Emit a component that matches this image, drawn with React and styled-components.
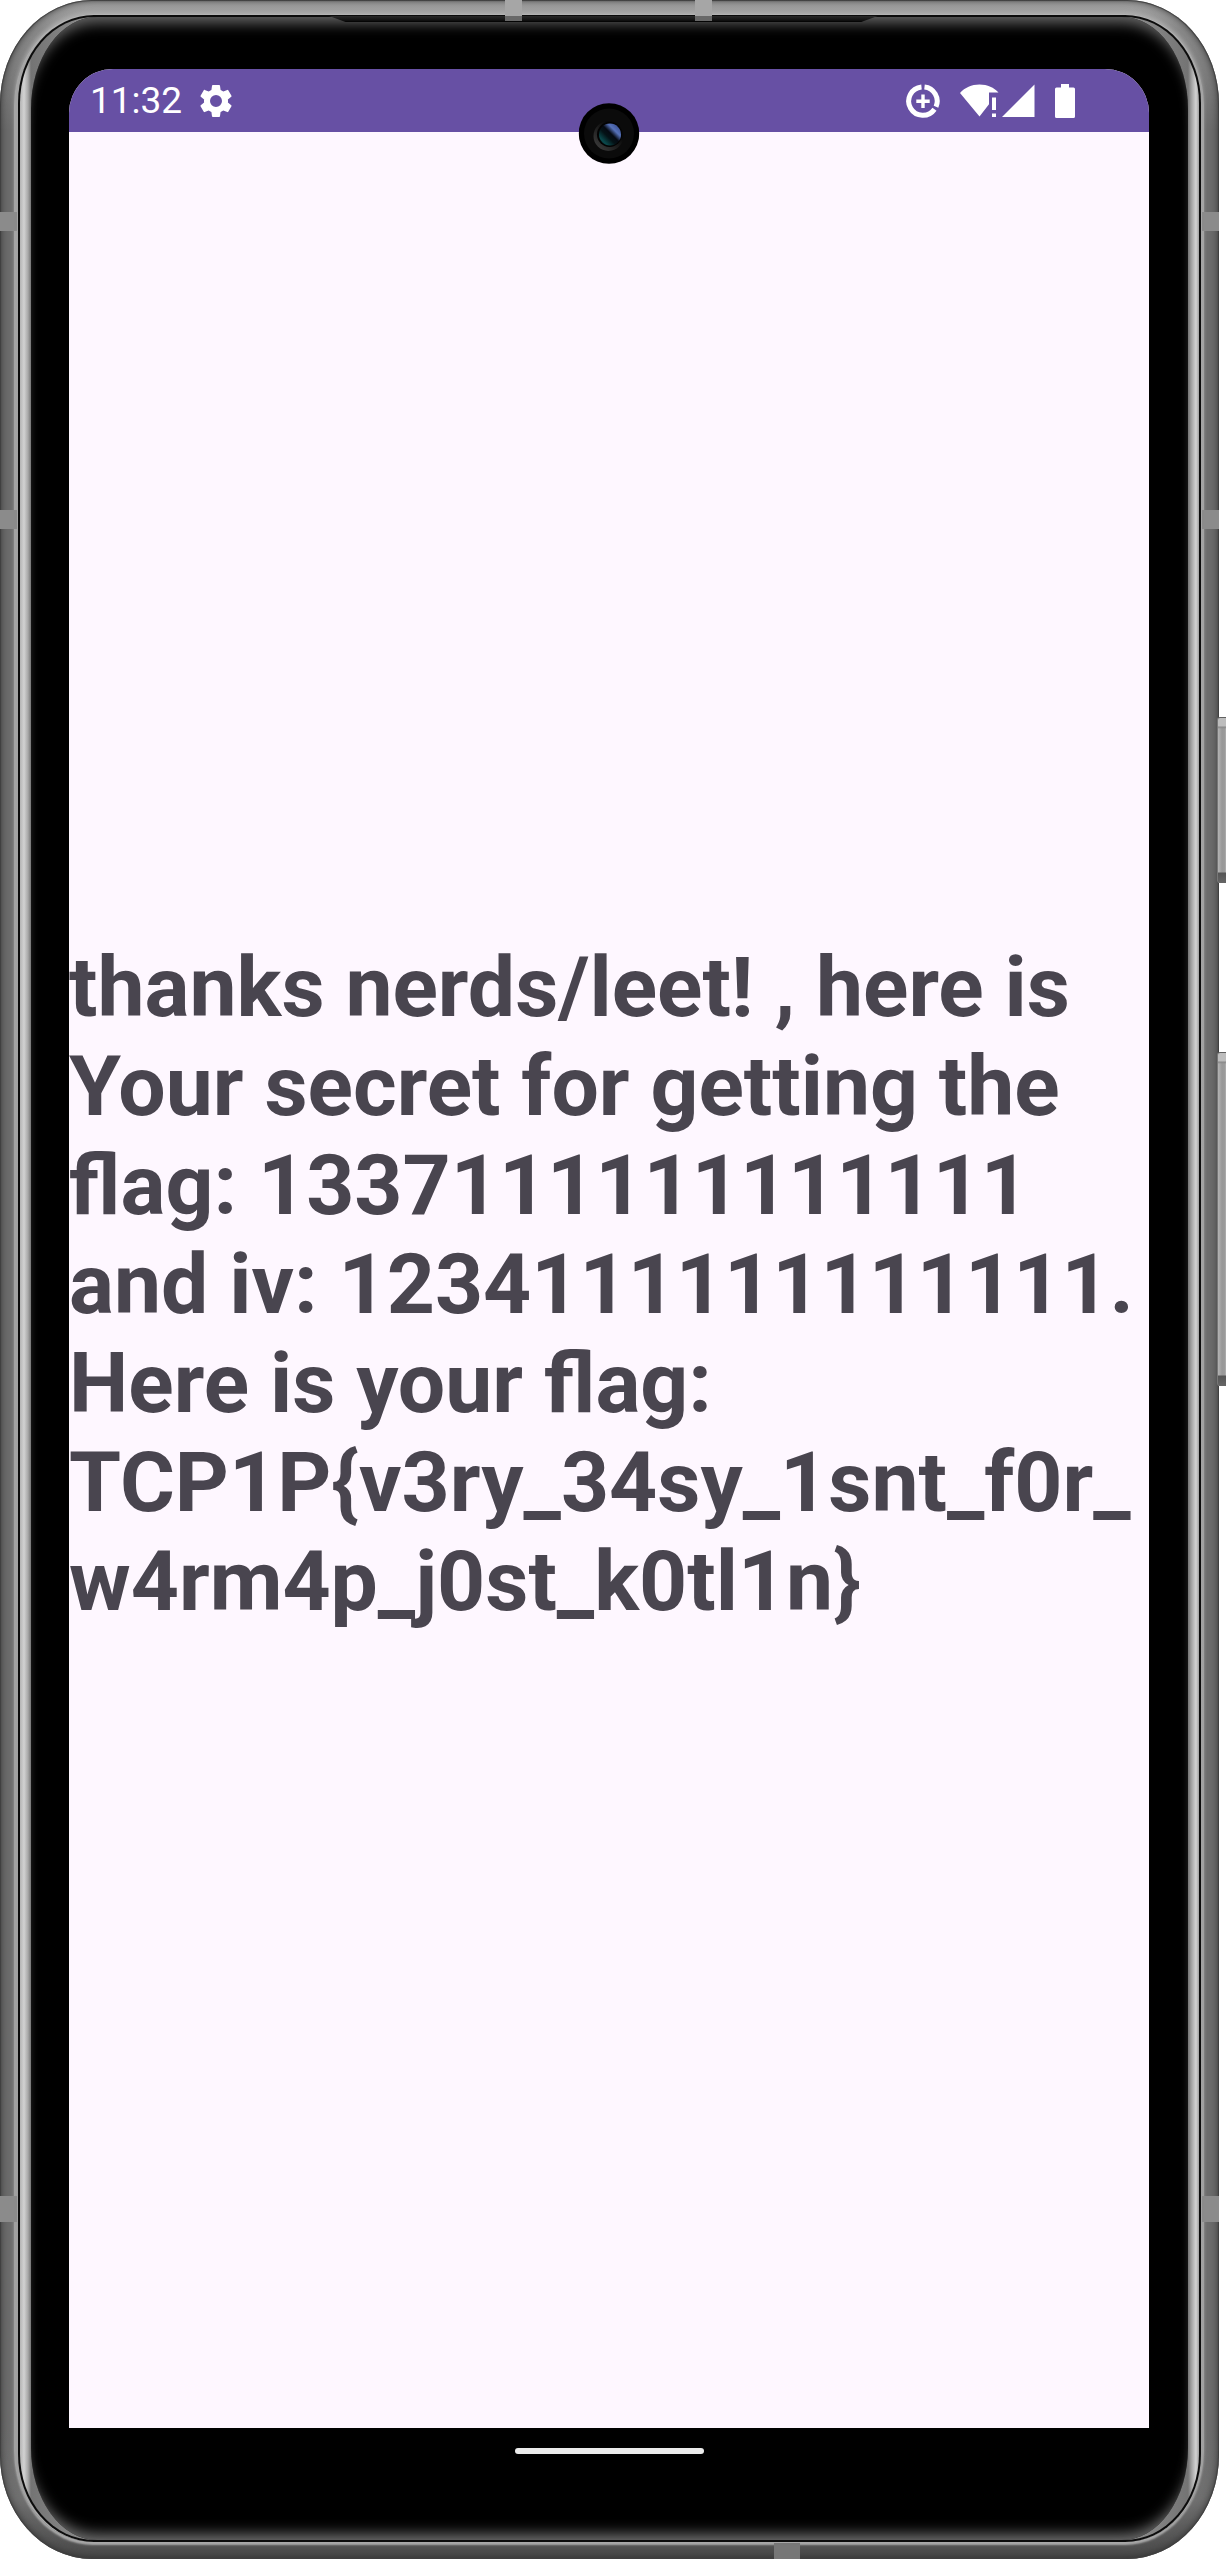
import React from "react";
import styled, { createGlobalStyle } from "styled-components";

const GlobalStyle = createGlobalStyle`
  * { box-sizing: border-box; }
  body {
    margin: 0;
    background: #ffffff;
    font-family: Roboto, "Liberation Sans", sans-serif;
  }
`;

const Page = styled.div`
  display: flex;
  min-height: 100vh;
  padding-right: 7px;
  position: relative;
  overflow: hidden;
`;

const Frame = styled.div`
  position: relative;
  z-index: 1;
  flex: 1;
  display: flex;
  padding: 14px 15px 17px 14px;
  border-radius: 92px / 104px;
  background: linear-gradient(to bottom, #a8a8a8 0, #8a8a8a 30px, #6c6c6c 130px, #6c6c6c calc(100% - 130px), #707070 calc(100% - 60px), #484848 100%);
  box-shadow: inset 0 0 9px #2c2c2c, inset 0 0 1px 1px #505050;
`;

const Highlight = styled.div`
  flex: 1;
  display: flex;
  padding: 1px 3px 0 4px;
  border-radius: 79px / 91px;
  background: linear-gradient(to bottom, #b4b4b4, #a4a4a4 60px, #a0a0a0 calc(100% - 60px), #b0b0b0);
  box-shadow: 0 -3px 4px -1px #b0b0b0, 0 4px 2px -1px #a8a8a8;
`;

const Seam = styled.div`
  flex: 1;
  display: flex;
  padding: 2px;
  border-radius: 76px / 88px;
  background: #0c0c0c;
`;

const Rim = styled.div`
  flex: 1;
  display: flex;
  padding: 0 11px;
  border-radius: 74px / 86px;
  background: linear-gradient(to right, #b4b4b4 0, #d2d2d2 4px, #a8a8a8 8px, #747474 11px, #8a8a8a 60px, #8a8a8a calc(100% - 60px), #747474 calc(100% - 11px), #a8a8a8 calc(100% - 7px), #d2d2d2 calc(100% - 3px), #a0a0a0 100%);
`;

const Glass = styled.div`
  flex: 1;
  min-width: 0;
  display: flex;
  flex-direction: column;
  padding: 52px 39px 70px 38px;
  border-radius: 66px / 92px;
  background: #000000;
  box-shadow: inset 0 14px 14px -8px #666666, inset 0 -14px 14px -8px #707070;
`;

const Earpiece = styled.div`
  position: absolute;
  top: 16px;
  left: 27%;
  right: 28%;
  height: 6px;
  background: linear-gradient(to bottom, #2a2a2a, #141414 4px, #000000);
  clip-path: polygon(0 0, 100% 0, 97% 100%, 3% 100%);
`;

const Band = styled.span`
  position: absolute;
  background: ${(p) => (p.$side === "top" ? "#a6a6a6" : "#8b8b8b")};
  ${(p) => p.$side === "left" && `left: 0; width: 17px; height: ${p.$length};`}
  ${(p) => p.$side === "right" && `right: 0; width: 17px; height: ${p.$length};`}
  ${(p) => p.$side === "top" && `top: 0; height: 21px; width: ${p.$length}; box-shadow: inset 0 -5px #686868;`}
  ${(p) => p.$side === "bottom" && `bottom: 0; height: 16px; width: ${p.$length}; background: #777777;`}
  ${(p) => (p.$side === "left" || p.$side === "right" ? "top" : "left")}: ${(p) => p.$at};
`;

const SideKey = styled.span`
  position: absolute;
  right: 0;
  width: 9px;
  z-index: 2;
  top: ${(p) => p.$top};
  height: ${(p) => p.$height};
  border-radius: 3px 0 0 3px;
  border-top: 1px solid #606060;
  border-left: 1px solid #777777;
  background:
    linear-gradient(to bottom, #bdbdbd 0, #bdbdbd 8px, #888888 9px, transparent 11px, transparent calc(100% - 11px), #555555 calc(100% - 10px), #666666 100%),
    linear-gradient(to right, #b4b4b4, #989898 4px, #9c9c9c 7px, #b8b8b8);
`;

const Screen = styled.div`
  position: relative;
  flex: 1;
  display: flex;
  flex-direction: column;
  border-radius: 44px 44px 0 0;
  background: #fef7ff;
`;

const StatusBar = styled.header`
  display: flex;
  align-items: center;
  justify-content: space-between;
  height: 63px;
  padding: 0 74px 0 21px;
  border-radius: 44px 44px 0 0;
  background: #6750a4;
  color: #ffffff;
`;

const StatusGroup = styled.div`
  display: flex;
  align-items: center;
  gap: ${(p) => p.$gap};
`;

const Clock = styled.time`
  font-size: 37px;
  line-height: 44px;
`;

const Icon = styled.svg`
  display: block;
  flex: none;
  fill: currentColor;
`;

const Camera = styled.svg`
  position: absolute;
  top: 34px;
  left: 50%;
  transform: translateX(-50%);
`;

const Content = styled.main`
  flex: 1;
  display: flex;
  flex-direction: column;
  justify-content: center;
  padding-top: 8px;
`;

const Message = styled.p`
  margin: 0;
  color: #49454f;
  font-size: 84px;
  font-weight: 700;
  line-height: 99px;
  overflow-wrap: anywhere;
`;

const NavBar = styled.nav`
  display: flex;
  justify-content: center;
  height: 42px;
  padding-top: 20px;
`;

const HomeHandle = styled.button`
  width: 189px;
  height: 6px;
  padding: 0;
  border: 0;
  border-radius: 3px;
  background: #ebebeb;
`;

const bands = [
  { side: "left", at: "212px", length: "19px" },
  { side: "right", at: "212px", length: "19px" },
  { side: "left", at: "510px", length: "19px" },
  { side: "right", at: "510px", length: "19px" },
  { side: "left", at: "calc(100% - 363px)", length: "26px" },
  { side: "right", at: "calc(100% - 363px)", length: "26px" },
  { side: "top", at: "calc(50% - 105px)", length: "17px" },
  { side: "top", at: "calc(50% + 85px)", length: "17px" },
  { side: "bottom", at: "calc(50% + 164px)", length: "26px" },
];

function GearIcon() {
  return (
    <Icon width="40" height="40" viewBox="0 0 24 24" aria-label="Settings">
      <path d="M19.14 12.94c.04-.3.06-.61.06-.94 0-.32-.02-.64-.07-.94l2.03-1.58a.49.49 0 0 0 .12-.61l-1.92-3.32a.488.488 0 0 0-.59-.22l-2.39.96c-.5-.38-1.03-.7-1.62-.94l-.36-2.54a.484.484 0 0 0-.48-.41h-3.84c-.24 0-.43.17-.47.41l-.36 2.54c-.59.24-1.13.57-1.62.94l-2.39-.96c-.22-.08-.47 0-.59.22L2.74 8.87c-.12.21-.08.47.12.61l2.03 1.58c-.05.3-.09.63-.09.94s.02.64.07.94l-2.03 1.58a.49.49 0 0 0-.12.61l1.92 3.32c.12.22.37.29.59.22l2.39-.96c.5.38 1.03.7 1.62.94l.36 2.54c.05.24.24.41.48.41h3.84c.24 0 .44-.17.47-.41l.36-2.54c.59-.24 1.13-.56 1.62-.94l2.39.96c.22.08.47 0 .59-.22l1.92-3.32c.12-.22.07-.47-.12-.61l-2.01-1.58zM12 15.6A3.6 3.6 0 1 1 12 8.4a3.6 3.6 0 0 1 0 7.2z" />
    </Icon>
  );
}

function DataSaverIcon() {
  return (
    <Icon width="34" height="34" viewBox="0 0 34 34" aria-label="Data saver">
      <g fill="none" stroke="currentColor" strokeWidth="5">
        <path d="M15.5 3A14.2 14.2 0 1 0 28.5 25.3" />
        <path d="M18.5 3A14.2 14.2 0 0 1 30 22.8" />
      </g>
      <path d="M15.3 10.5h3.4v5h5v3.4h-5v5h-3.4v-5h-5v-3.4h5z" />
    </Icon>
  );
}

function WifiIcon() {
  return (
    <Icon width="39" height="34" viewBox="0 0 39 34" aria-label="Wi-Fi, no internet">
      <path d="M0 9C5 3.5 11.5.5 19.5.5S34 3.5 38.5 8.500H29v11.8L19.5 32.5z" />
      <path d="M32 13.5h4V26h-4zM32 29.5h4V33h-4z" />
    </Icon>
  );
}

function SignalIcon() {
  return (
    <Icon width="33" height="34" viewBox="0 0 33 34" aria-label="Mobile signal">
      <path d="M32.5.5V33H0z" />
    </Icon>
  );
}

function BatteryIcon() {
  return (
    <Icon width="20" height="34" viewBox="0 0 20 34" aria-label="Battery full">
      <path d="M6 0h8v3.5h4.5A1.5 1.5 0 0 1 20 5v27.5a1.5 1.5 0 0 1-1.5 1.500h-17A1.5 1.5 0 0 1 0 32.5V5a1.5 1.5 0 0 1 1.5-1.500H6z" />
    </Icon>
  );
}

function FrontCamera() {
  return (
    <Camera width="61" height="61" viewBox="0 0 61 61" aria-hidden="true">
      <defs>
        <linearGradient id="lensBlue" x1="1" y1="0" x2="0" y2="1">
          <stop offset="0.1" stopColor="#3a4f90" />
          <stop offset="0.3" stopColor="#5672ba" />
          <stop offset="0.46" stopColor="#050a12" />
          <stop offset="0.6" stopColor="#041216" />
          <stop offset="0.8" stopColor="#0a484b" />
          <stop offset="1" stopColor="#052b2d" />
        </linearGradient>
        <linearGradient id="lensRing" x1="1" y1="0" x2="0" y2="1">
          <stop offset="0.3" stopColor="#080808" />
          <stop offset="1" stopColor="#444444" />
        </linearGradient>
      </defs>
      <circle cx="30.5" cy="30.5" r="30.3" fill="#000000" />
      <circle cx="30.5" cy="30.5" r="25" fill="#0b0b0b" />
      <circle cx="30" cy="33" r="15" fill="url(#lensRing)" />
      <circle cx="31" cy="31.5" r="12.5" fill="#030303" />
      <circle cx="31.5" cy="31.5" r="11" fill="url(#lensBlue)" />
    </Camera>
  );
}

export default function App() {
  return (
    <>
      <GlobalStyle />
      <Page>
        <SideKey $top="28%" $height="166px" />
        <SideKey $top="41.1%" $height="334px" />
        <Frame>
          <Highlight>
            <Seam>
              <Rim>
                <Glass>
                  <Screen>
                    <StatusBar>
                      <StatusGroup $gap="14px">
                        <Clock>11:32</Clock>
                        <GearIcon />
                      </StatusGroup>
                      <StatusGroup $gap="20px">
                        <DataSaverIcon />
                        <StatusGroup $gap="3px">
                          <WifiIcon />
                          <SignalIcon />
                        </StatusGroup>
                        <BatteryIcon />
                      </StatusGroup>
                    </StatusBar>
                    <Content>
                      <Message>
                        thanks nerds/leet! , here is Your secret for getting the flag:
                        1337111111111111 and iv: 1234111111111111. Here is your flag:
                        TCP1P&#123;v3ry_34sy_1snt_f0r_w4rm4p_j0st_k0tl1n&#125;
                      </Message>
                    </Content>
                    <FrontCamera />
                  </Screen>
                  <NavBar aria-label="System navigation">
                    <HomeHandle type="button" aria-label="Home" />
                  </NavBar>
                </Glass>
              </Rim>
            </Seam>
          </Highlight>
          <Earpiece />
          {bands.map((b) => (
            <Band key={b.side + b.at} $side={b.side} $at={b.at} $length={b.length} />
          ))}
        </Frame>
      </Page>
    </>
  );
}
